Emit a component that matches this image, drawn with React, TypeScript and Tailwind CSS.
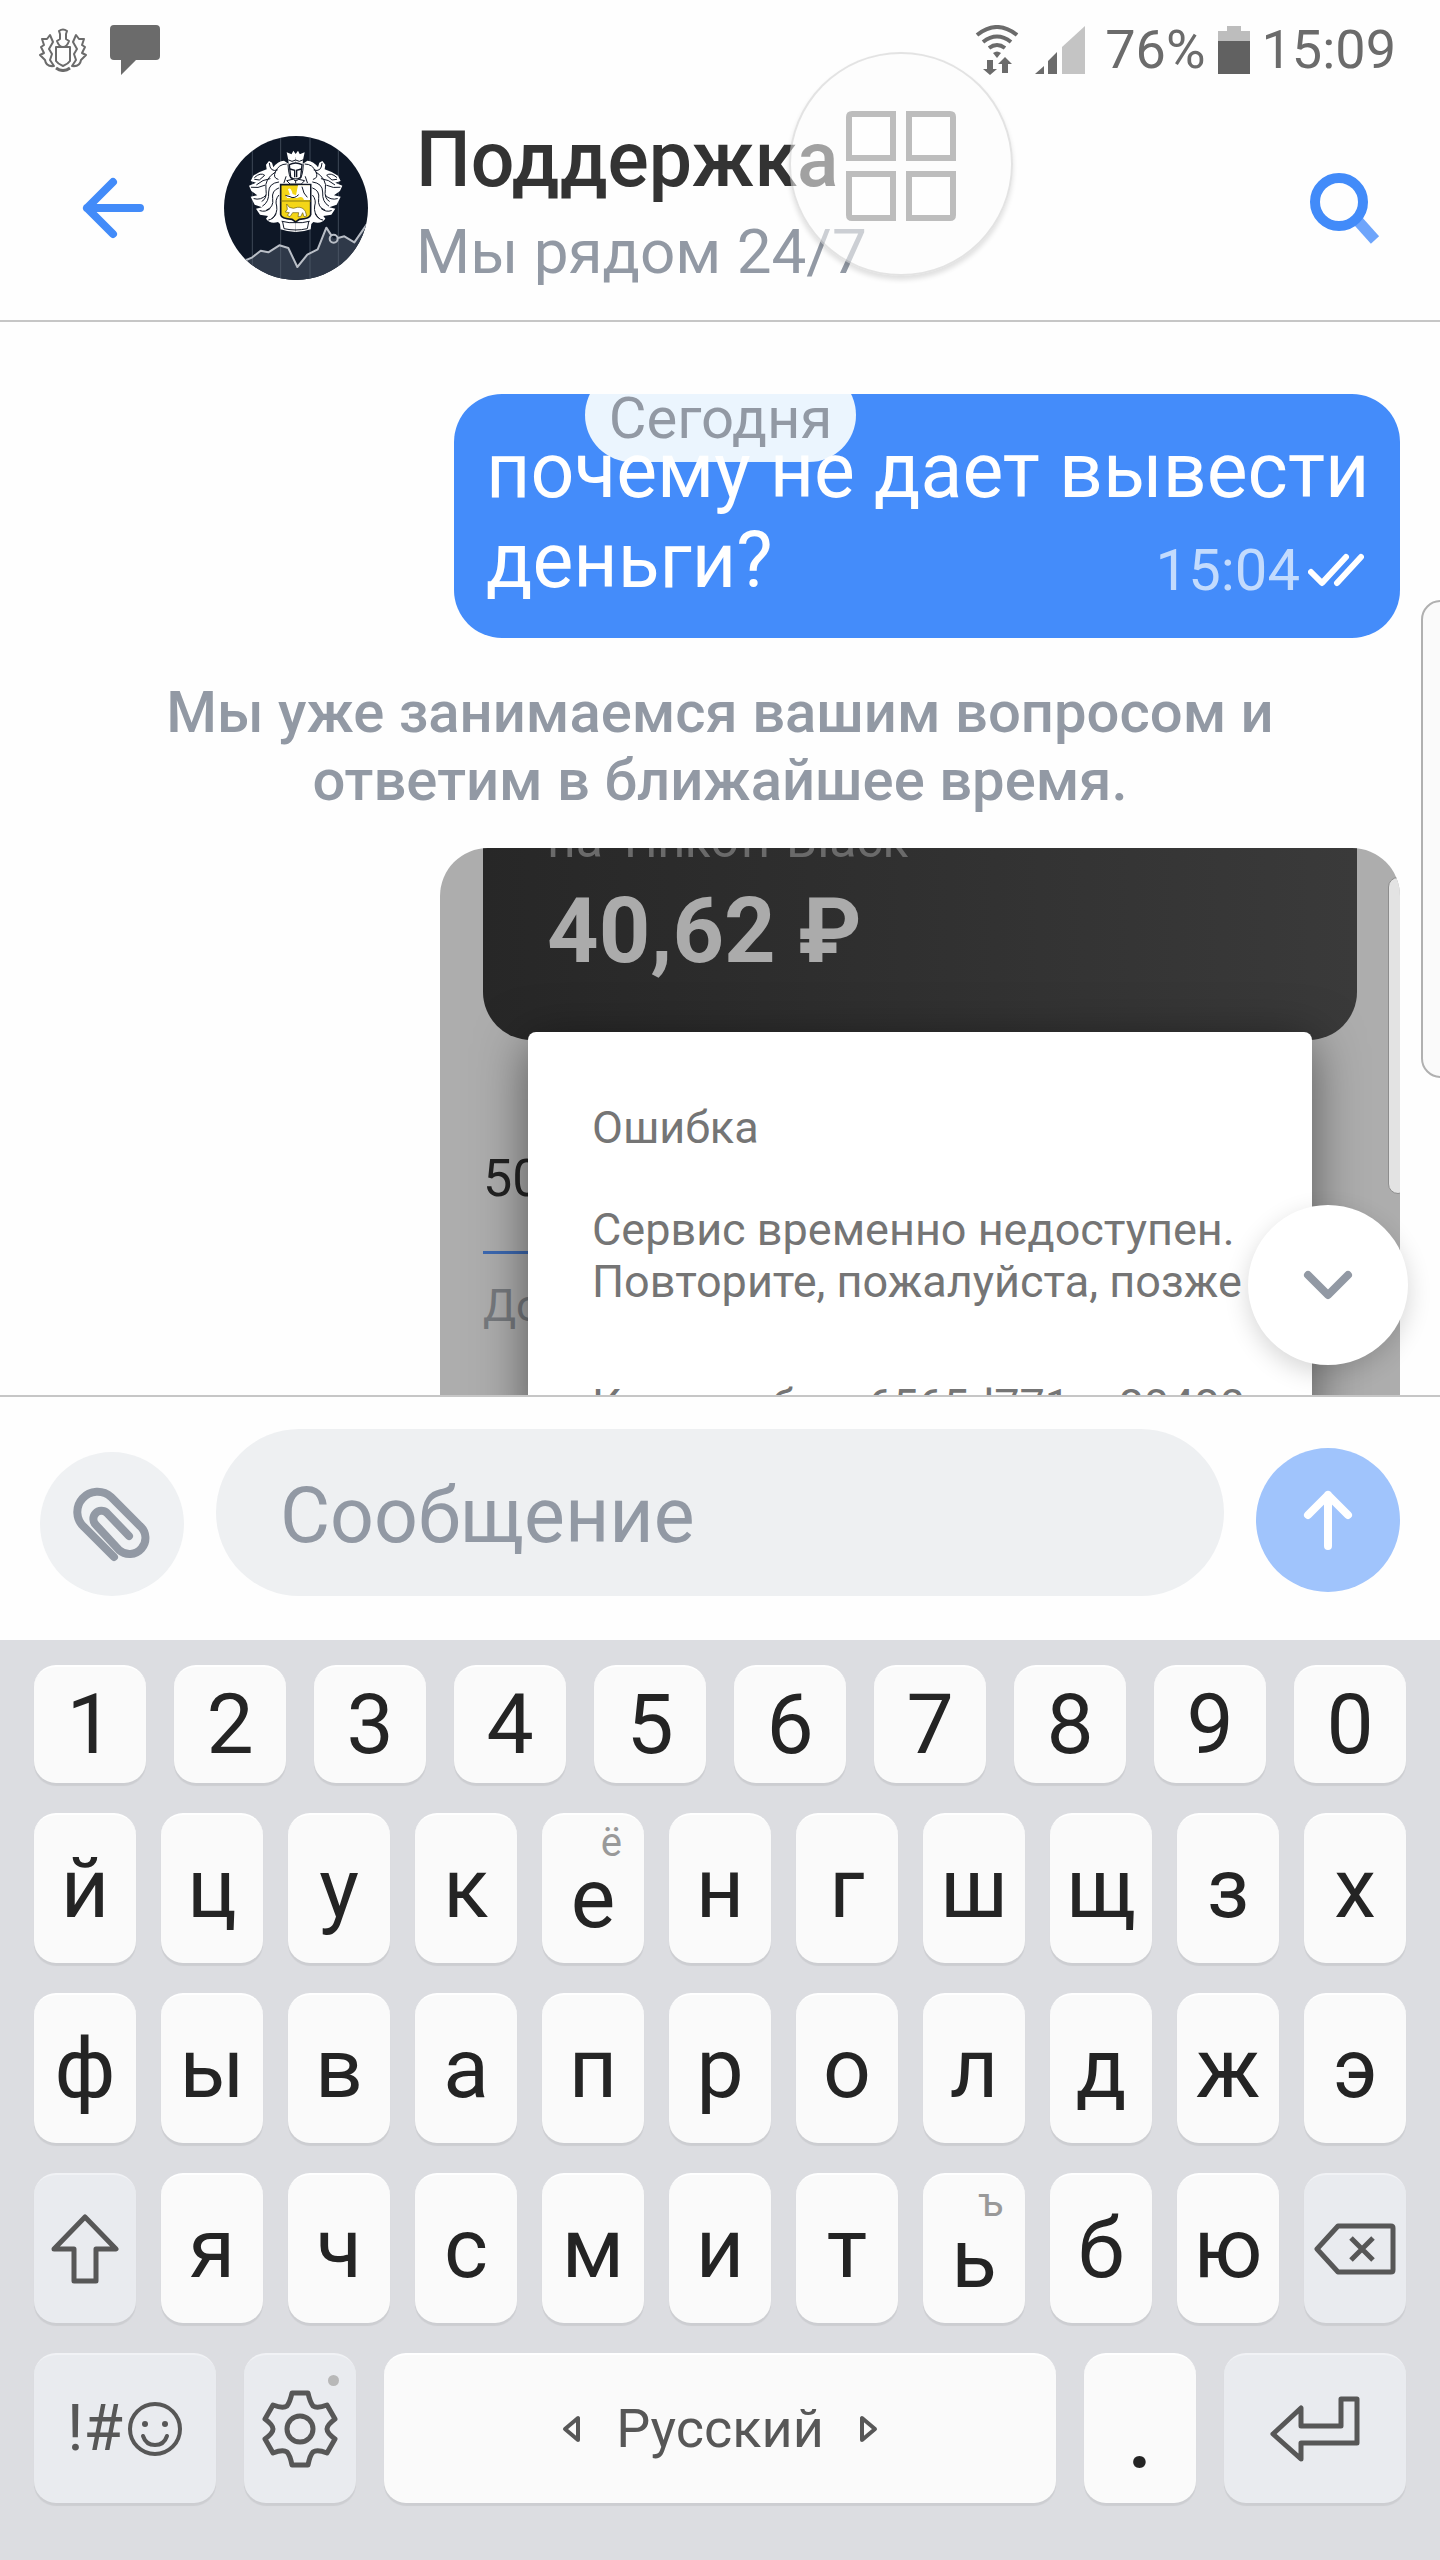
import type { ReactNode } from 'react'

const digits = ['1', '2', '3', '4', '5', '6', '7', '8', '9', '0']
const rowTop = ['й', 'ц', 'у', 'к', 'е', 'н', 'г', 'ш', 'щ', 'з', 'х']
const rowMiddle = ['ф', 'ы', 'в', 'а', 'п', 'р', 'о', 'л', 'д', 'ж', 'э']
const rowBottom = ['я', 'ч', 'с', 'м', 'и', 'т', 'ь', 'б', 'ю']
const hints: Record<string, string> = { е: 'ё', ь: 'ъ' }

const keyBase =
  'relative flex items-center justify-center rounded-[22px] border-t-2 shadow-[0_3px_1px_rgba(0,0,0,0.07)]'
const keyLight = 'border-white bg-[#fafafa] text-[#242424]'
const keyDark = 'border-[#f1f2f5] bg-[#e9ebef] text-[#575757]'

function CrestOutline() {
  return (
    <svg viewBox="0 0 50 44" className="h-11 w-[50px]" fill="none" stroke="#6b6b6b" strokeWidth="2" strokeLinejoin="round">
      <path d="M21 3q4-3 8 0l-1 3v5l3 2q-2 6-6 6t-6-6l3-2V6z" />
      <path d="M18 19h14v14q-2 3-7 5-5-2-7-5z" />
      <path d="M18 40q7 5 14 0" strokeWidth="3" />
      <path d="M12 7l3 7-4 7 3 5-2 6 4 6q-8 1-9-6l-5-5 4-2-3-6 3-2-2-6 5 0z" />
      <path d="M38 7l-3 7 4 7-3 5 2 6-4 6q8 1 9-6l5-5-4-2 3-6-3-2 2-6-5 0z" />
    </svg>
  )
}

function StatusBar() {
  return (
    <div className="flex h-24 items-center justify-between pl-[38px] pr-11 pt-1 text-[#6b6b6b]">
      <div className="flex items-center gap-[22px]">
        <CrestOutline />
        <svg viewBox="0 0 50 50" className="size-[50px]" fill="#6b6b6b">
          <path d="M4 0h42a4 4 0 0 1 4 4v27a4 4 0 0 1-4 4H26L11 50V35H4a4 4 0 0 1-4-4V4a4 4 0 0 1 4-4z" />
        </svg>
      </div>
      <div className="flex items-center text-[54px] leading-none">
        <svg viewBox="0 0 44 50" className="mr-4 h-[50px] w-11" fill="none" stroke="#6b6b6b" strokeWidth="4">
          <path d="M2 10q20-16 40 0M8 17q14-11 28 0M14 23q8-6 16 0" />
          <path d="M18 28q4-3 8 0l-4 5z" fill="#6b6b6b" stroke="none" />
          <path d="M12 35h6v9h4l-7 6-7-6h4zM27 48h6V39h4l-7-7-7 7h4z" fill="#6b6b6b" stroke="none" />
        </svg>
        <svg viewBox="0 0 50 48" className="mr-5 h-12 w-[50px]">
          <path d="M0 48l9-8v8zM13 48V35l9-9v22z" fill="#6b6b6b" />
          <path d="M27 48V21L50 0v48z" fill="#c4c4c4" />
        </svg>
        <span>76%</span>
        <svg viewBox="0 0 32 48" className="ml-3 mr-3 h-12 w-8">
          <path d="M9 0h14v5h9v12H0V5h9z" fill="#bdbdbd" />
          <path d="M0 15h32v33H0z" fill="#616161" />
        </svg>
        <span>15:09</span>
      </div>
    </div>
  )
}

function CrestHalf() {
  return (
    <g strokeLinejoin="round" strokeLinecap="round">
      <path
        d="M257 110L245 103 230 97 235 120 236 132 222 122Q204 122 190 142L186 128 177 123 168 134 170 148Q146 156 130 167L122 183 138 188 117 197 124 213 142 226 122 230 134 254 156 262 138 266 150 284 174 288 168 296Q180 313 204 306L210 312 212 328Q234 336 257 336Z"
        fill="#fff"
      />
      <g fill="none" stroke="#111827" strokeWidth="3">
        <path d="M229 132Q206 132 196 156Q188 174 204 178M178 130Q180 158 202 150M196 156Q162 178 168 208Q172 236 156 244" />
        <path d="M134 172Q152 156 164 166L148 180 134 178M140 194Q158 178 180 176M124 202Q144 206 164 196M132 236Q152 242 168 226" />
        <path d="M206 186Q176 190 176 216Q178 246 158 258M206 204Q184 212 188 236Q192 262 170 270M206 226Q194 240 200 258Q204 280 186 296" />
        <path d="M150 272Q166 278 180 266M176 300Q190 298 198 282" />
        <path d="M236 120L246 124 257 120M234 134Q236 172 246 178L257 182M228 170L222 188" />
        <path d="M218 306L222 326Q240 330 257 330M216 304Q238 310 257 308" />
      </g>
    </g>
  )
}

function SupportAvatar() {
  return (
    <svg viewBox="42 48 432 432" className="size-36 shrink-0 rounded-full bg-[#0e1726]" role="img" aria-label="Логотип">
      <path d="M42 425L127 412 152 392 175 397 208 376 235 384 262 441 292 404 323 388 349 323 371 356 403 349 433 367 474 308V480H42Z" fill="#2f3949" />
      <path d="M127 48V480M212 48V480M300 48V480M385 48V480" stroke="#566070" strokeWidth="2" />
      <path d="M100 424L127 412 152 392 175 397 208 376 235 384 262 441 292 404 323 388 349 323 364 346M384 354L403 349 433 367 474 308" fill="none" stroke="#b9bec6" strokeWidth="6" strokeLinejoin="round" />
      <circle cx="371" cy="356" r="12" fill="none" stroke="#b9bec6" strokeWidth="6" />
      <CrestHalf />
      <g transform="matrix(-1 0 0 1 514 0)">
        <CrestHalf />
      </g>
      <path d="M240 112L250 92 257 102 264 92 274 112Z" fill="#fff" />
      <path d="M238 134Q257 124 276 134L272 172 257 180 242 172Z" fill="#fff" stroke="#111827" strokeWidth="4" />
      <path d="M240 147L254 151V172M274 147L260 151V172" fill="none" stroke="#111827" strokeWidth="4" />
      <path d="M212 194H302V284Q300 296 268 298L257 306 246 298Q214 296 212 284Z" fill="#f4d617" stroke="#111827" strokeWidth="5" />
      <path d="M264 196H300V240H282Q278 226 262 234L232 234 226 226 240 224 234 208Q242 200 248 222L258 226Z" fill="#fff" />
      <path d="M226 226L240 230Q252 238 266 224M276 200Q280 222 292 232" fill="none" stroke="#111827" strokeWidth="3" />
      <path d="M212 243H302" stroke="#8a7a10" strokeWidth="3" />
      <path d="M230 252L238 262Q250 268 262 262Q278 260 286 274L290 288 282 290 278 278 272 290 264 290 266 278 248 278 240 290 232 286 238 278 226 276 232 268Z" fill="#fff" stroke="#6b5d0a" strokeWidth="2" />
      <path d="M230 182L257 176 284 182 274 192H240Z" fill="#fff" stroke="#111827" strokeWidth="3" />
      <path d="M252 181H263M257 181V190" stroke="#111827" strokeWidth="3" />
    </svg>
  )
}

function ChatHeader() {
  return (
    <header className="relative flex h-[226px] items-center border-b-2 border-[#c6c6c6] pl-20 pr-[60px]">
      <button type="button" aria-label="Назад" className="mr-[78px]">
        <svg viewBox="0 0 66 64" className="h-16 w-[66px]" fill="none" stroke="#428bf9" strokeWidth="8" strokeLinecap="round" strokeLinejoin="round">
          <path d="M33 6L7 32 33 58M7 32H60" />
        </svg>
      </button>
      <SupportAvatar />
      <div className="ml-12 flex-1">
        <h1 className="text-[77px] font-medium leading-[88px] text-[#333]">Поддержка</h1>
        <p className="text-[62px] leading-[96px] text-[#9299a4]">Мы рядом 24/7</p>
      </div>
      <button type="button" aria-label="Поиск">
        <svg viewBox="0 0 72 74" className="h-[74px] w-[72px]" fill="none" strokeWidth="10">
          <path d="M50 50L67 69" stroke="#6ea5fb" strokeWidth="11" />
          <circle cx="31" cy="31" r="24" stroke="#428bf9" />
        </svg>
      </button>
      {/* floating assistive menu */}
      <button
        type="button"
        aria-label="Меню"
        className="absolute -top-11 left-[789px] flex size-56 items-center justify-center rounded-full border-2 border-black/10 bg-[#fcfcfc]/55 pt-1 shadow-[0_4px_5px_rgba(0,0,0,0.12)]"
      >
        <svg viewBox="0 0 110 110" className="size-[110px]" fill="#fff" fillOpacity="0.5" stroke="#bdbdbd" strokeWidth="6">
          <path d="M6 3H47V47H3V6Q3 3 6 3ZM63 3H104Q107 3 107 6V47H63ZM3 63H47V107H6Q3 107 3 104ZM63 63H107V104Q107 107 104 107H63Z" />
        </svg>
      </button>
    </header>
  )
}

function Screenshot() {
  return (
    <div className="relative ml-auto mt-[34px] h-[547px] w-[960px] max-w-full overflow-hidden rounded-t-[48px] bg-[#adadad]">
      <div className="mx-[43px] flex h-48 flex-col justify-end rounded-b-[48px] bg-linear-to-r from-[#272727] to-[#3a3a3a] px-16 pb-6">
        <p className="text-[50px] leading-[60px] text-[#6a6a6a]">на Tinkoff Black</p>
        <p className="mb-[42px] mt-5 text-[90px] font-bold leading-[84px] text-[#ababab]">40,62 ₽</p>
      </div>
      <div className="mt-[109px] px-[43px] leading-[60px]">
        <p className="text-[52px] text-[#222]">50</p>
        <div className="mt-[42px] h-[3px] bg-[#3c68b0]" />
        <p className="mt-[22px] text-[44px] text-[#76797d]">До</p>
      </div>
      <div className="absolute left-[88px] right-[88px] top-[184px] rounded-t-lg bg-white px-16 pt-[70px] text-[45px] leading-[52px] text-[#757575] shadow-[0_10px_50px_rgba(0,0,0,0.5)]">
        <p>Ошибка</p>
        <p className="mt-[50px] whitespace-nowrap">
          Сервис временно недоступен.
          <br />
          Повторите, пожалуйста, позже
        </p>
        <p className="mt-[72px] whitespace-nowrap">Код ошибки: 6565d771-c-80480</p>
      </div>
      <div className="absolute -right-2 top-[29px] h-[317px] w-5 rounded-xl border border-[#8d8d8d] bg-[#e3e3e3]" />
    </div>
  )
}

function Chat() {
  return (
    <main className="relative overflow-hidden border-b-2 border-[#c6c6c6] px-10 pt-[72px]">
      <div className="relative ml-auto w-[946px] max-w-full overflow-hidden rounded-[48px] bg-[#448cfa] py-8 pl-8 pr-5">
        <div className="absolute -top-[26px] left-[131px] flex h-[94px] w-[271px] items-center justify-center rounded-[47px] bg-[#ebf5fe] pt-1.5 text-[58px] text-[#9299a4]">
          Сегодня
        </div>
        <p className="relative text-[77px] leading-[90px] text-white">почему не дает вывести деньги?</p>
        <div className="absolute bottom-8 right-9 flex items-center gap-2 text-[58px] leading-[72px] text-[#c3dbfd]">
          15:04
          <svg viewBox="0 0 56 34" className="h-[34px] w-14" fill="none" stroke="#fff" strokeWidth="6" strokeLinecap="round" strokeLinejoin="round">
            <path d="M3 19L14 30 38 4M29 30L53 4" />
          </svg>
        </div>
      </div>
      <p className="mt-10 text-center text-[58px] font-medium leading-[68px] text-[#9299a4]">
        Мы уже занимаемся вашим вопросом и<br />ответим в ближайшее время.
      </p>
      <Screenshot />
      <button
        type="button"
        aria-label="Вниз"
        className="absolute bottom-[30px] right-8 flex size-40 items-center justify-center rounded-full bg-white shadow-[0_8px_24px_rgba(0,0,0,0.16)]"
      >
        <svg viewBox="0 0 50 32" className="h-8 w-[50px]" fill="none" stroke="#9299a4" strokeWidth="8" strokeLinecap="round" strokeLinejoin="round">
          <path d="M5 6L25 26 45 6" />
        </svg>
      </button>
      {/* edge panel handle */}
      <div className="absolute -right-5 top-[278px] h-[478px] w-[39px] rounded-[20px] border-2 border-[#b0b0b0] bg-[#fafafa]" />
    </main>
  )
}

function Composer() {
  return (
    <form className="flex items-end gap-8 px-10 pb-11 pt-8" onSubmit={(e) => e.preventDefault()}>
      <button type="button" aria-label="Прикрепить" className="flex size-36 shrink-0 items-center justify-center rounded-full bg-[#eff1f3]">
        <svg viewBox="0 0 80 80" className="size-20" fill="none" stroke="#9299a4" strokeWidth="8" strokeLinecap="round">
          <path d="M42 73L12 43A19 19 0 0 1 39 13L68 42A15 15 0 0 1 47 66L24 41A8 8 0 0 1 35 29L57 52" />
        </svg>
      </button>
      <input
        type="text"
        aria-label="Сообщение"
        placeholder="Сообщение"
        className="h-[167px] min-w-0 flex-1 rounded-full bg-[#eef0f2] px-16 pt-1.5 text-[77px] text-[#333] outline-none placeholder:text-[#9299a4]"
      />
      <button type="submit" aria-label="Отправить" className="mb-1 flex size-36 shrink-0 items-center justify-center rounded-full bg-[#a0c4fc]">
        <svg viewBox="0 0 50 62" className="h-[62px] w-[50px]" fill="none" stroke="#fff" strokeWidth="8" strokeLinecap="round" strokeLinejoin="round">
          <path d="M25 57V6M5 26L25 6 45 26" />
        </svg>
      </button>
    </form>
  )
}

function LetterKey({ char }: { char: string }) {
  const hint = hints[char]
  return (
    <button type="button" className={`${keyBase} ${keyLight} h-[150px] flex-1 text-[84px] leading-none`}>
      {hint && <span className="absolute right-[22px] top-1 text-[40px] leading-[48px] text-[#999]">{hint}</span>}
      <span className={hint ? 'pt-5' : ''}>{char}</span>
    </button>
  )
}

function IconKey({ label, className, children }: { label: string; className: string; children: ReactNode }) {
  return (
    <button type="button" aria-label={label} className={`${keyBase} ${keyDark} h-[150px] ${className}`}>
      {children}
    </button>
  )
}

function Keyboard() {
  return (
    <section className="flex flex-1 flex-col gap-[30px] bg-[#dcdde1] px-[34px] pb-14 pt-[25px]">
      <div className="flex gap-7">
        {digits.map((d) => (
          <button key={d} type="button" className={`${keyBase} ${keyLight} h-[118px] flex-1 text-[84px] leading-none`}>
            {d}
          </button>
        ))}
      </div>
      <div className="flex gap-[25px]">
        {rowTop.map((c) => (
          <LetterKey key={c} char={c} />
        ))}
      </div>
      <div className="flex gap-[25px]">
        {rowMiddle.map((c) => (
          <LetterKey key={c} char={c} />
        ))}
      </div>
      <div className="flex gap-[25px]">
        <IconKey label="Shift" className="flex-1">
          <svg viewBox="0 0 68 70" className="h-[70px] w-[68px]" fill="none" stroke="#575757" strokeWidth="5" strokeLinejoin="round">
            <path d="M34 3L65 35H45V67H23V35H3Z" />
          </svg>
        </IconKey>
        {rowBottom.map((c) => (
          <LetterKey key={c} char={c} />
        ))}
        <IconKey label="Удалить" className="flex-1">
          <svg viewBox="0 0 82 52" className="h-[52px] w-[82px]" fill="none" stroke="#575757" strokeWidth="5" strokeLinejoin="round">
            <path d="M24 3H77Q79 3 79 5V47Q79 49 77 49H24L3 26Z" />
            <path d="M37 15L59 37M59 15L37 37" />
          </svg>
        </IconKey>
      </div>
      <div className="flex gap-7">
        <IconKey label="Символы" className="w-[182px] gap-1">
          <span className="text-[64px] leading-none">!#</span>
          <svg viewBox="0 0 56 56" className="size-14" fill="none" stroke="#575757" strokeWidth="4" strokeLinecap="round">
            <circle cx="28" cy="28" r="25" />
            <path d="M16 35Q19 44 28 44T40 35" />
            <circle cx="18" cy="23" r="3" fill="#575757" stroke="none" />
            <circle cx="38" cy="23" r="3" fill="#575757" stroke="none" />
          </svg>
        </IconKey>
        <IconKey label="Настройки" className="w-28">
          <span className="absolute right-[17px] top-5 size-[11px] rounded-full bg-[#b8b8b8]" />
          <svg viewBox="0 0 76 78" className="h-[78px] w-[76px]" fill="none" stroke="#575757" strokeWidth="5" strokeLinejoin="round">
            <path d="M30 3H46Q48 12 51 16Q55 19 65 15L73 29Q65 35 65 39T73 49L65 63Q55 59 51 62Q48 65 46 75H30Q28 65 25 62Q21 59 11 63L3 49Q11 43 11 39T3 29L11 15Q21 19 25 16Q28 12 30 3Z" />
            <circle cx="38" cy="39" r="13" />
          </svg>
        </IconKey>
        <button type="button" className={`${keyBase} ${keyLight} h-[150px] flex-1 gap-9`}>
          <svg viewBox="0 0 18 28" className="h-7 w-[18px]" fill="none" stroke="#575757" strokeWidth="4" strokeLinejoin="round">
            <path d="M16 3V25L3 14Z" />
          </svg>
          <span className="text-[54px] leading-none text-[#575757]">Русский</span>
          <svg viewBox="0 0 18 28" className="h-7 w-[18px]" fill="none" stroke="#575757" strokeWidth="4" strokeLinejoin="round">
            <path d="M2 3V25L15 14Z" />
          </svg>
        </button>
        <button type="button" className={`${keyBase} ${keyLight} h-[150px] w-28 text-[112px] leading-none`}>
          .
        </button>
        <IconKey label="Ввод" className="w-[182px]">
          <svg viewBox="0 0 90 66" className="h-[66px] w-[90px]" fill="none" stroke="#575757" strokeWidth="5" strokeLinejoin="round">
            <path d="M3 38L31 12V30H71V3H87V47H31V63Z" />
          </svg>
        </IconKey>
      </div>
    </section>
  )
}

export default function App() {
  return (
    <div className="flex min-h-screen flex-col overflow-hidden bg-[#fefefe] font-['Roboto','Noto_Sans',sans-serif]">
      <StatusBar />
      <ChatHeader />
      <Chat />
      <Composer />
      <Keyboard />
    </div>
  )
}
